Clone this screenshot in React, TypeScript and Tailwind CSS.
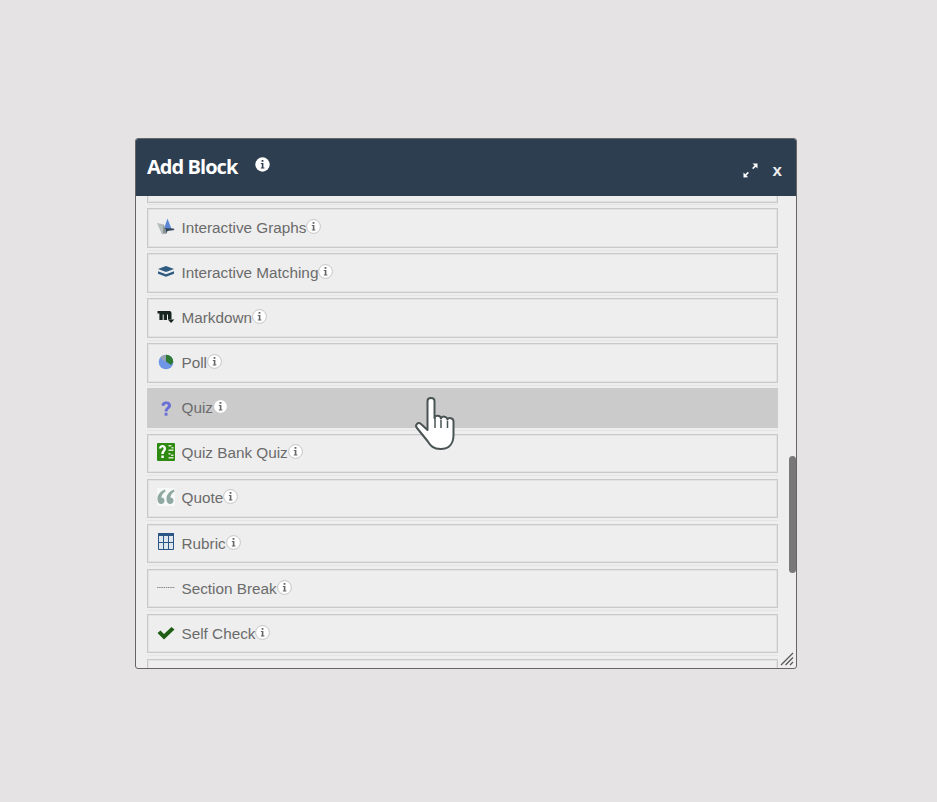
import React from "react";

const Info = ({ solid = false }: { solid?: boolean }) => (
  <svg width="15" height="15" viewBox="0 0 15 15" className="shrink-0">
    <circle cx="7.5" cy="7.5" r={solid ? 7.2 : 6.9} fill="#fff" stroke={solid ? "none" : "#c4c4c4"} strokeWidth="1" />
    <rect x="6.6" y="3" width="1.800" height="1.800" fill={solid ? "#2c3e50" : "#666"} />
    <path d="M5.800 6h2.600v4.600h1v1H5.800v-1h1V7h-1z" fill={solid ? "#2c3e50" : "#666"} />
  </svg>
);

const icons: Record<string, React.ReactNode> = {
  graphs: (
    <svg width="18" height="18" viewBox="0 0 18 18" className="translate-y-[1px]">
      <path d="M0 5l7 1.500 1 9-3 1z" fill="#b5bdbc" />
      <path d="M10.500 .5l4 10.500-7.500-.5z" fill="#5a86d6" />
      <path d="M8 10l8.500.5 1 1.500-7 1-1.500 3z" fill="#33475a" />
      <path d="M6.500 6.500l1.500 3.500 1 6-3-1z" fill="#858f93" />
    </svg>
  ),
  matching: (
    <svg width="18" height="18" viewBox="0 0 18 18" className="translate-y-[1px]">
      <path d="M9 3l8 3-8 3-8-3z" fill="#2d5a80" />
      <path d="M1 8.300l8 3 8-3v2.500l-8 3-8-3z" fill="#2d5a80" />
    </svg>
  ),
  markdown: (
    <svg width="18" height="18" viewBox="0 0 18 18" className="translate-y-[1px]">
      <path d="M.5 3h12a2 2 0 012 2v6.500H11V6.500h-1V12H6.700V6.500h-1V12H2.400V5.500H.5z" fill="#17241f" />
      <path d="M10.800 11.500h6.500l-3.200 3.500z" fill="#17241f" />
    </svg>
  ),
  poll: (
    <svg width="18" height="18" viewBox="0 0 18 18" className="translate-y-[0.5px]">
      <circle cx="9" cy="8.500" r="7.300" fill="#6f96e6" />
      <path d="M9 1.200A7.300 7.300 0 0116.300 8.500L14 11.500 9 8z" fill="#2f7a33" />
      <path d="M9 1.200A7.300 7.300 0 003.500 4L8 8.500z" fill="#9aa4ad" />
    </svg>
  ),
  quiz: (
    <svg width="18" height="18" viewBox="0 0 18 18" className="translate-y-[2.5px]">
      <path d="M4.500 5C4.700 2 7 1 9.300 1 12 1 14 2.500 14 5c0 3.300-3.500 3.500-3.500 6H7.700c0-3.700 3.100-4 3.100-6 0-1-.6-1.500-1.600-1.500-1.100 0-1.700.7-1.700 2z" fill="#6a6fd8" />
      <rect x="7.600" y="12.300" width="2.900" height="2.900" fill="#6a6fd8" />
    </svg>
  ),
  bank: (
    <svg width="18" height="18" viewBox="0 0 18 18">
      <rect width="18" height="18" rx="1" fill="#2f8a12" />
      <path d="M2 5.500C2 3.200 3.700 2 5.500 2S9 3.200 9 5.500c0 2.800-2.200 3-2.200 5.500H4.300c0-3.300 2.300-3.500 2.300-5.500 0-.7-.4-1.200-1.100-1.200s-1.100.5-1.100 1.200z" fill="#fff" />
      <rect x="4.300" y="12.500" width="2.500" height="2.500" fill="#fff" />
      <path d="M11.500 2h3v1.500h-3zM14.500 4h2v1.500h-2zM11.500 6.500h5V8h-5zM11.500 10h2v1.500h-2zM14 11.500h2.500V13H14zM11.500 14h5v1.500h-5z" fill="#d5e6cc" />
    </svg>
  ),
  quote: (
    <svg width="18" height="18" viewBox="0 0 18 18">
      <rect width="18" height="18" fill="#f7f9f8" />
      <path d="M8 1.500C3.500 3 .5 6.500.5 11c0 3 1.500 5 3.700 5 2 0 3.300-1.500 3.300-3.300 0-2-1.300-3.200-3.300-3.200C5 6.500 6.500 4.500 8.500 3.500z" fill="#8fa9a2" />
      <path d="M17 1.500C12.500 3 9.500 6.500 9.500 11c0 3 1.500 5 3.700 5 2 0 3.300-1.500 3.300-3.300 0-2-1.300-3.200-3.300-3.200C14 6.500 15.500 4.500 17.500 3.500z" fill="#8fa9a2" />
    </svg>
  ),
  rubric: (
    <svg width="18" height="18" viewBox="0 0 18 18">
      <rect x="1" y="0" width="16" height="17" fill="#dfe7ee" />
      <rect x="1" y="0" width="16" height="3" fill="#2a5585" />
      <path d="M1.500 0v16.500h15V0M6.500 3v13.500M11.500 3v13.500M1.500 9.500h15" fill="none" stroke="#2a5585" strokeWidth="1" />
    </svg>
  ),
  section: (
    <svg width="18" height="18" viewBox="0 0 18 18" className="translate-y-[2px]">
      <path d="M0 7.500h18" stroke="#888" strokeWidth="1" strokeDasharray="1.500 .7" />
    </svg>
  ),
  check: (
    <svg width="18" height="18" viewBox="0 0 18 18" className="translate-y-[2px]">
      <path d="M0.500 8l3-2.500L7 9l7.500-7L17.500 4.500 7 14.500z" fill="#1f5c14" />
    </svg>
  ),
};

const rows = [
  ["Interactive Graphs", "graphs"],
  ["Interactive Matching", "matching"],
  ["Markdown", "markdown"],
  ["Poll", "poll"],
  ["Quiz", "quiz"],
  ["Quiz Bank Quiz", "bank"],
  ["Quote", "quote"],
  ["Rubric", "rubric"],
  ["Section Break", "section"],
  ["Self Check", "check"],
];

const box = "border border-[#c9c9c9] shadow-[inset_0_0_0_1px_#e2e2e2]";

export default function App() {
  return (
    <div className="min-h-[802px] bg-[#e5e3e4] pt-[138px] pl-[135px] font-['Liberation_Sans',sans-serif]">
      <div className="relative h-[531px] w-[662px] overflow-hidden rounded-[3px] border border-[#666] bg-[#eeeeee]">
        <div className="flex h-[57px] items-start justify-between bg-[#2c3e50] pl-[11px] pr-[14px]">
          <div className="flex items-start">
            <h1 className="mt-[14px] font-['Open_Sans',sans-serif] text-[20px] leading-[27px] font-bold tracking-[-0.95px] text-white">Add Block</h1>
            <span className="mt-[18px] ml-[18px]"><Info solid /></span>
          </div>
          <div className="mt-[21px] flex items-center gap-[15px]">
            <svg width="15" height="15" viewBox="0 0 15 15">
              <path d="M14.500.500v5l-1.800-1.800-2.500 2.500-1.100-1.100 2.500-2.500L9.500.500zM.500 14.500v-5l1.800 1.800 2.500-2.500 1.100 1.100-2.500 2.500 1.800 1.800z" fill="#fff" />
            </svg>
            <span className="mt-[1px] text-[17px] leading-[20px] font-bold text-[#eeeeee]">x</span>
          </div>
        </div>
        <div className="h-[473px] overflow-hidden pl-[11px]">
          <div className="-mt-[34px] w-[631px]">
            <div className="border-b border-[#e4e4e4] pb-[1.390625px]">
              <div className={`h-[41px] ${box}`} />
            </div>
            {rows.map(([label, icon]) => (
              <div key={label} className="mt-[2.640625px] border-b border-[#e4e4e4] pb-[2px]">
                <div className={`flex h-[39.46875px] items-center pl-[8px] ${label === "Quiz" ? "bg-[#cbcbcb]" : box}`}>
                  <span className={`-mt-[3px] flex h-[18px] w-[18px] shrink-0 items-center justify-center ${label === "Quiz" ? "ml-[2px]" : "ml-[1px]"}`}>{icons[icon]}</span>
                  <span className="ml-[6.5px] text-[15.3px] leading-[20px] text-[#6b6b6b]">{label}</span>
                  <span className="-mt-[3px]"><Info /></span>
                </div>
              </div>
            ))}
            <div className={`mt-[2.640625px] h-[40px] ${box}`} />
          </div>
        </div>
        <div className="absolute top-[317px] right-0 h-[117px] w-[7px] rounded-[4px] bg-[#787878]" />
        <svg className="absolute right-[2px] bottom-[2px]" width="14" height="14" viewBox="0 0 14 14">
          <path d="M1 13L13 1M5.500 13L13 5.500M10 13l3-3" stroke="#555" strokeWidth="1.200" />
        </svg>
        <svg className="absolute top-[258px] left-[278px]" width="42" height="54" viewBox="0 0 42 54">
          <path
            d="M13.500 4c0-4 7-4 7 0v17c.5-3 6-3 6.500.5 .8-2.800 6-2.500 6.500 1 1-2.500 6-1.500 6 2V38c0 8-4 14-13 14-7 0-10-3-13-8L3 31c-2.500-3 1-6.500 4-4l6.500 6z"
            fill="#fff"
            stroke="#4a5455"
            strokeWidth="2"
            strokeLinejoin="round"
          />
          <path d="M21 21v10M27 23v8M33.500 24v7" stroke="#4a5455" strokeWidth="1.500" fill="none" />
        </svg>
      </div>
    </div>
  );
}
